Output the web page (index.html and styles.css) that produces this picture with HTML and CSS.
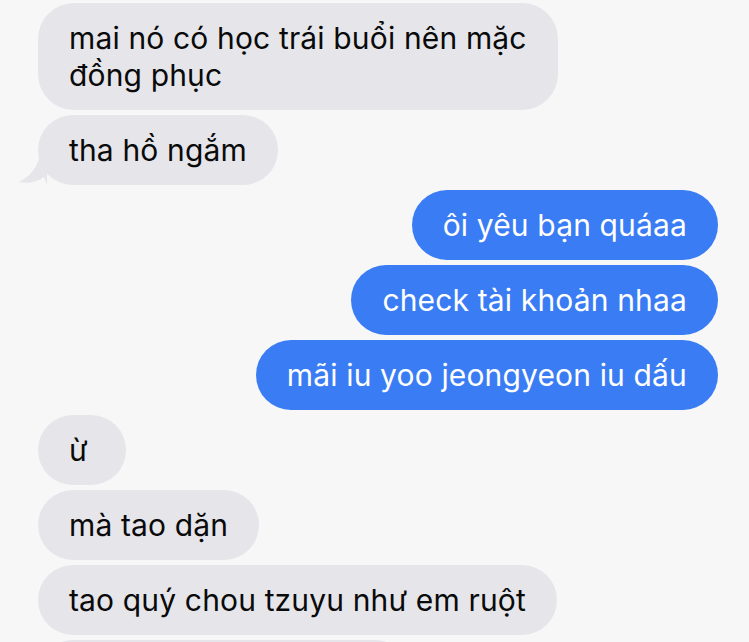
FILE: index.html
```html
<!DOCTYPE html>
<html lang="vi">
<head>
<meta charset="utf-8">
<link rel="stylesheet" href="styles.css">
</head>
<body>
<div class="chat">
  <div class="msg in"><div class="bubble">mai nó có học trái buổi nên mặc<br>đồng phục</div></div>
  <div class="msg in"><div class="bubble">tha hồ ngắm
    <svg class="tail-svg" width="28" height="38" viewBox="0 0 28 38"><path d="M22 0 C21 15 15 28 0 35 C9 37 18 35 25 30 L28 38 L28 0 Z" fill="#e5e5ea"/></svg>
  </div></div>
  <div class="msg out"><div class="bubble">ôi yêu bạn quáaa</div></div>
  <div class="msg out"><div class="bubble">check tài khoản nhaa</div></div>
  <div class="msg out"><div class="bubble">mãi iu yoo jeongyeon iu dấu</div></div>
  <div class="msg in"><div class="bubble short">ừ</div></div>
  <div class="msg in"><div class="bubble">mà tao dặn</div></div>
  <div class="msg in"><div class="bubble">tao quý chou tzuyu như em ruột</div></div>
  <div class="msg in"><div class="bubble partial">&nbsp;</div></div>
</div>
</body>
</html>
```
FILE: styles.css
```css
html, body {
  margin: 0;
  padding: 0;
  background: #f7f7f8;
  height: 642px;
  overflow: hidden;
}
.chat {
  display: flex;
  flex-direction: column;
  gap: 5px;
  padding: 3px 31px 0 38px;
  font-family: Inter, "Noto Sans", sans-serif;
  font-size: 30px;
  line-height: 37px;
}
.msg {
  display: flex;
}
.msg.in { justify-content: flex-start; }
.msg.out { justify-content: flex-end; }
.bubble {
  position: relative;
  box-sizing: border-box;
  padding: 16.5px 31px 16.5px 31px;
  border-radius: 36px;
  background: #e5e5ea;
  color: #0a0a0a;
  letter-spacing: 0.15px;
}
.msg.out .bubble {
  background: #3a7cf4;
  color: #fff;
}
.tail-svg {
  position: absolute;
  left: -19px;
  bottom: 0;
}
.short {
  min-width: 88px;
}
.partial {
  width: 372px;
}
```
